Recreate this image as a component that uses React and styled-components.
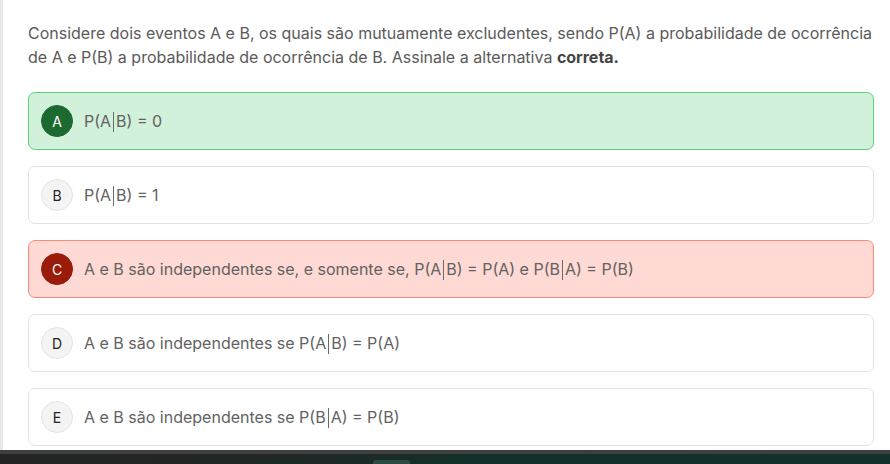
import * as React from "react";
import styled, { createGlobalStyle, css } from "styled-components";

const GlobalStyle = createGlobalStyle`
  html, body {
    margin: 0;
    padding: 0;
    background: #fff;
  }
  body {
    font-family: Inter, "Noto Sans", sans-serif;
    color: #555;
  }
`;

const Page = styled.div`
  height: 464px;
  display: flex;
  flex-direction: column;
  overflow: hidden;
`;

const Main = styled.div`
  flex: 1;
  border-left: 3px solid #e7e7e7;
  padding: 21px 14px 0 25px;
`;

const Question = styled.p`
  margin: 0 0 23px;
  font-size: 16px;
  line-height: 24px;
  color: #5a5a5a;

  strong {
    font-weight: 700;
    color: #444;
  }
`;

const List = styled.div`
  display: flex;
  flex-direction: column;
  gap: 16px;
  margin-right: 2px;
`;

const variants = {
  correct: css`
    background: #d1f1da;
    border-color: #5fcf7c;
  `,
  wrong: css`
    background: #ffd9d3;
    border-color: #f58b78;
  `,
  idle: css`
    background: #fff;
    border-color: #e3e3e3;
  `,
};

const Option = styled.div`
  display: flex;
  align-items: center;
  gap: 11px;
  height: 58px;
  box-sizing: border-box;
  padding: 0 12px;
  border: 1px solid;
  border-radius: 7px;
  ${(p) => variants[p.$state]}
`;

const letterVariants = {
  correct: css`
    background: #1c6a2f;
    color: #fff;
    border-color: #1c6a2f;
  `,
  wrong: css`
    background: #9a1b08;
    color: #fff;
    border-color: #9a1b08;
  `,
  idle: css`
    background: #f4f4f4;
    color: #222;
    border-color: #e4e4e4;
  `,
};

const Letter = styled.span`
  width: 32px;
  height: 32px;
  box-sizing: border-box;
  border-radius: 50%;
  border: 1px solid;
  display: flex;
  align-items: center;
  justify-content: center;
  font-size: 14px;
  font-weight: 400;
  flex-shrink: 0;
  ${(p) => letterVariants[p.$state]}
`;

const Text = styled.span`
  font-size: 16px;
  color: #626262;
  white-space: nowrap;
`;

const Mid = styled.span`
  display: inline-block;
  width: 1px;
  height: 20px;
  background: #6a6a6a;
  margin: 0 2px;
  vertical-align: -5px;
`;

const Taskbar = styled.div`
  height: 10px;
  background: linear-gradient(90deg, #242424 0%, #1f2826 35%, #11302b 55%, #12302c 100%);
  border-top: 4px solid #3f3f3f;
  box-sizing: content-box;
  display: flex;
  justify-content: flex-start;
  padding-left: 373px;
`;

const TaskTab = styled.span`
  width: 37px;
  height: 4px;
  margin-top: 6px;
  border-radius: 3px 3px 0 0;
  background: #2c4a45;
`;

const P = ({ a, b }) => (
  <>
    P({a}
    <Mid />
    {b})
  </>
);

const options = [
  { letter: "A", state: "correct", text: <><P a="A" b="B" /> = 0</> },
  { letter: "B", state: "idle", text: <><P a="A" b="B" /> = 1</> },
  {
    letter: "C",
    state: "wrong",
    text: (
      <>
        A e B são independentes se, e somente se, <P a="A" b="B" /> = P(A) e{" "}
        <P a="B" b="A" /> = P(B)
      </>
    ),
  },
  {
    letter: "D",
    state: "idle",
    text: <>A e B são independentes se <P a="A" b="B" /> = P(A)</>,
  },
  {
    letter: "E",
    state: "idle",
    text: <>A e B são independentes se <P a="B" b="A" /> = P(B)</>,
  },
];

const App = () => {
  return (
    <Page>
      <GlobalStyle />
      <Main>
        <Question>
          Considere dois eventos A e B, os quais são mutuamente excludentes, sendo P(A) a
          probabilidade de ocorrência de A e P(B) a probabilidade de ocorrência de B. Assinale a
          alternativa <strong>correta.</strong>
        </Question>
        <List>
          {options.map((o) => (
            <Option key={o.letter} $state={o.state}>
              <Letter $state={o.state}>{o.letter}</Letter>
              <Text>{o.text}</Text>
            </Option>
          ))}
        </List>
      </Main>
      <Taskbar>
        <TaskTab />
      </Taskbar>
    </Page>
  );
};

export default App;
